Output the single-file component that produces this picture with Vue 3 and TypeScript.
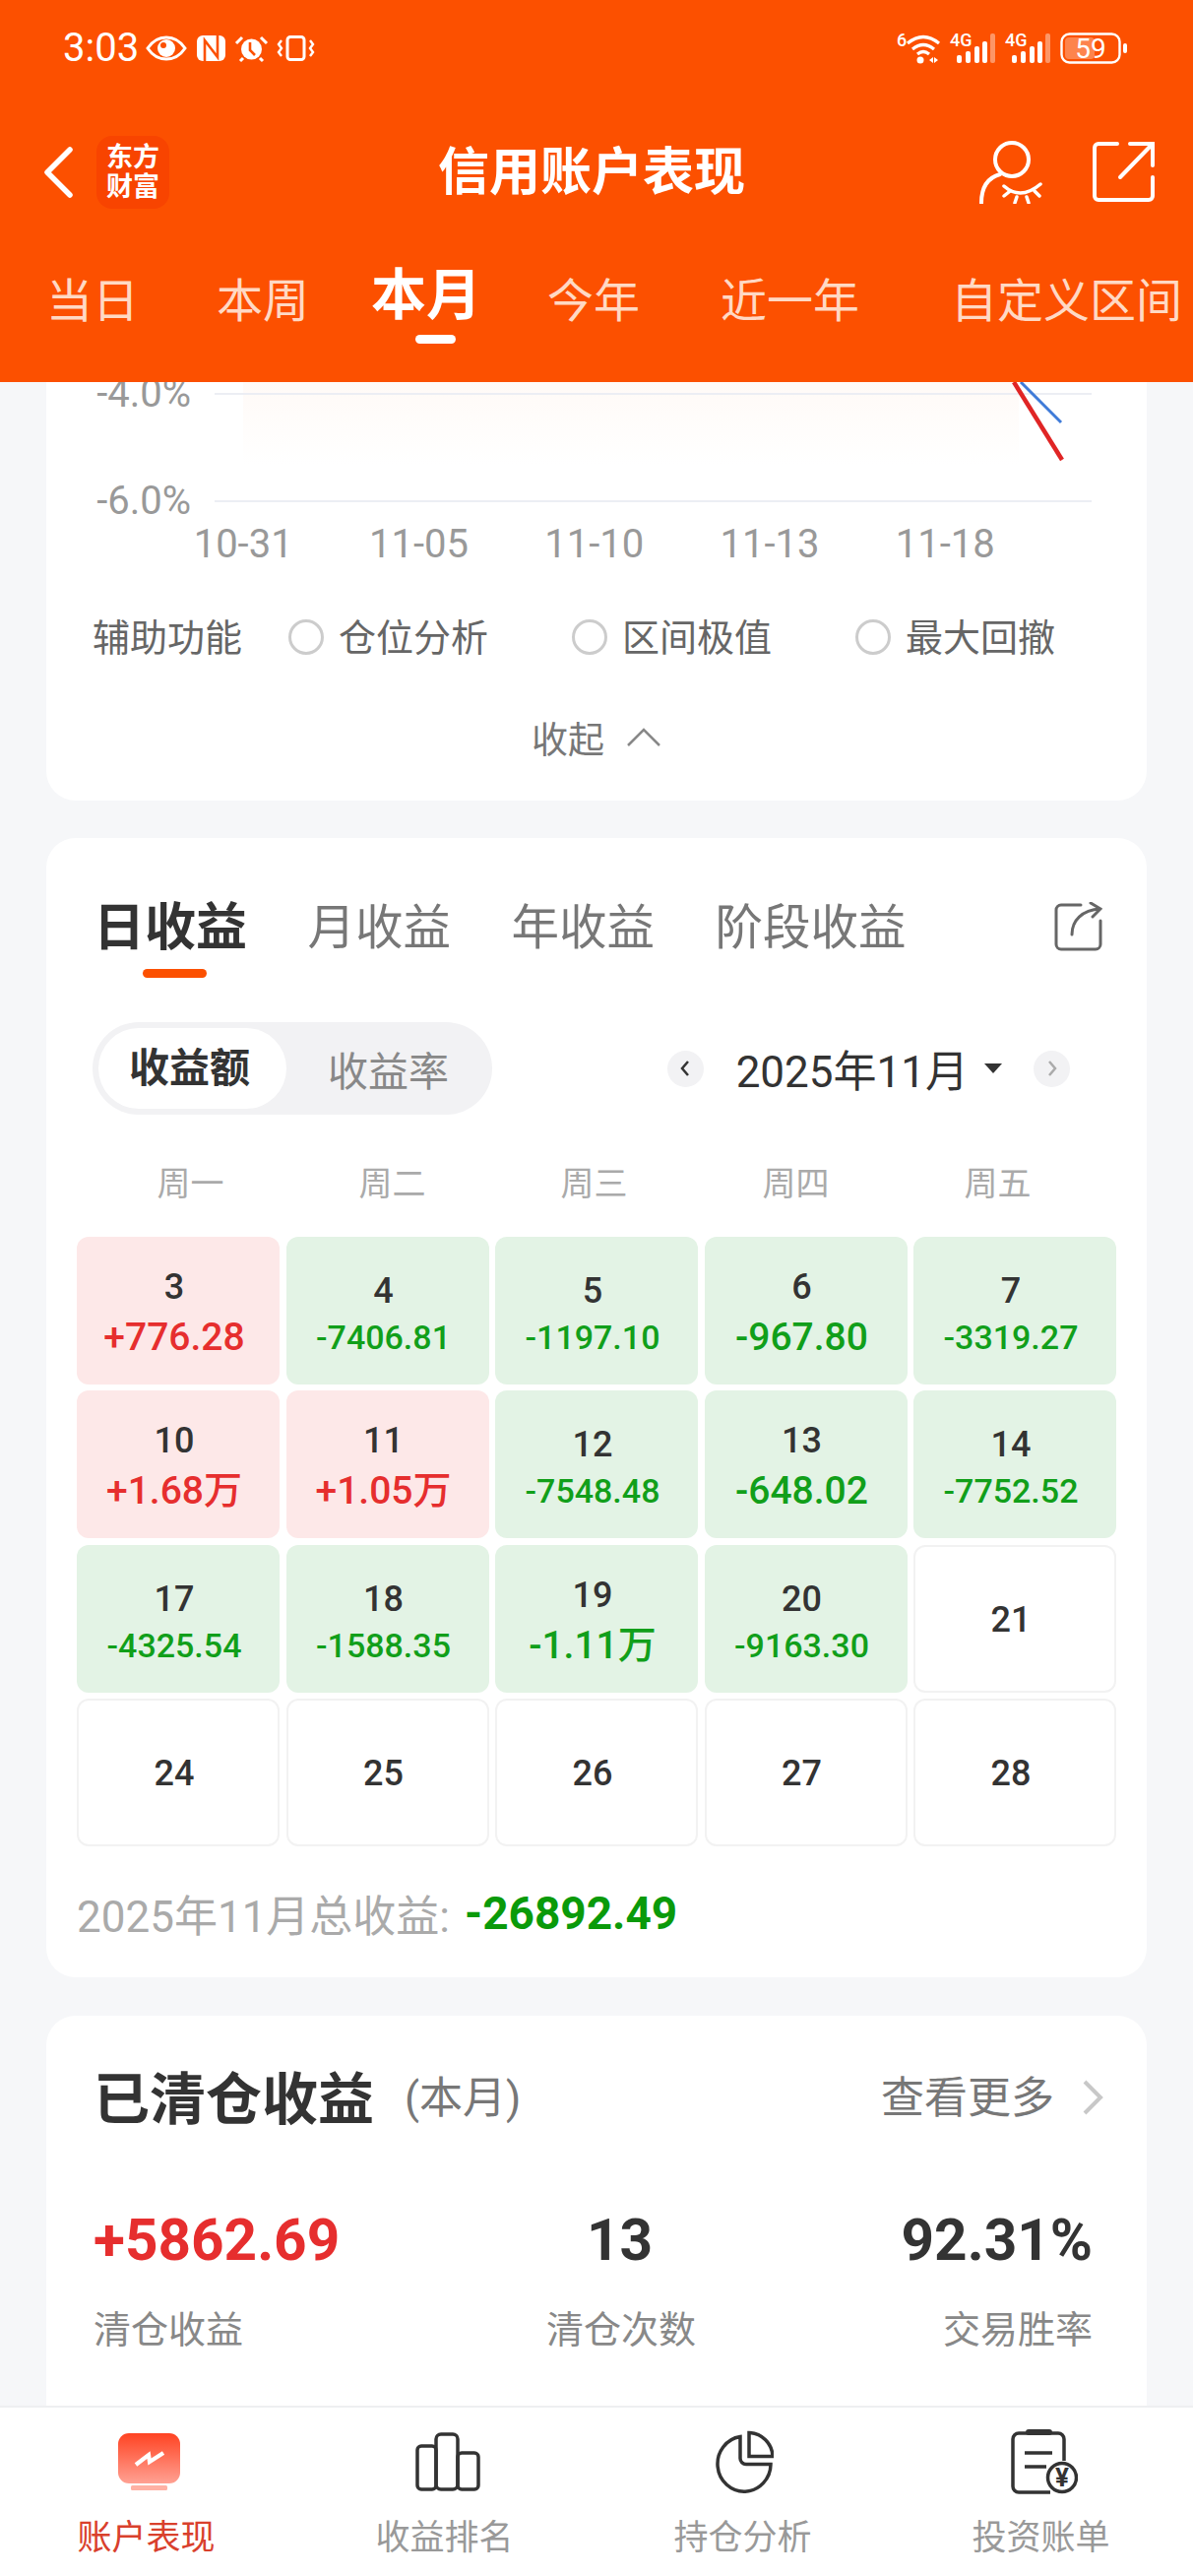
<script setup lang="ts">
type Day = { day: number; value?: string };

const periods = ['当日', '本周', '本月', '今年', '近一年', '自定义区间'];
const xLabels = ['10-31', '11-05', '11-10', '11-13', '11-18'];
const helpers = ['仓位分析', '区间极值', '最大回撤'];
const incomeTabs = ['日收益', '月收益', '年收益', '阶段收益'];
const weekdays = ['周一', '周二', '周三', '周四', '周五'];

const days: Day[] = [
  { day: 3, value: '+776.28' },
  { day: 4, value: '-7406.81' },
  { day: 5, value: '-1197.10' },
  { day: 6, value: '-967.80' },
  { day: 7, value: '-3319.27' },
  { day: 10, value: '+1.68万' },
  { day: 11, value: '+1.05万' },
  { day: 12, value: '-7548.48' },
  { day: 13, value: '-648.02' },
  { day: 14, value: '-7752.52' },
  { day: 17, value: '-4325.54' },
  { day: 18, value: '-1588.35' },
  { day: 19, value: '-1.11万' },
  { day: 20, value: '-9163.30' },
  { day: 21 },
  { day: 24 },
  { day: 25 },
  { day: 26 },
  { day: 27 },
  { day: 28 },
];

function cellClass(d: Day) {
  if (!d.value) return 'empty';
  return d.value.startsWith('+') ? 'up' : 'down';
}
</script>

<template>
  <div class="page">
    <header class="top">
      <div class="status">
        <div class="status-left">
          <span class="time">3:03</span>
          <svg width="42" height="26" viewBox="0 0 42 26">
            <path d="M2 13C8 4 14 2 21 2s13 2 19 11c-6 9-12 11-19 11S8 22 2 13Z" fill="none" stroke="#fff" stroke-width="3" />
            <circle cx="21" cy="13" r="9" fill="#fff" />
            <circle cx="18" cy="10" r="3" fill="#fc5000" />
          </svg>
          <svg width="29" height="26" viewBox="0 0 29 26">
            <rect x="0" y="0" width="29" height="26" rx="6" fill="#fff" />
            <path d="M8 26V5l13 17V0" fill="none" stroke="#fc5000" stroke-width="2.6" />
          </svg>
          <svg width="33" height="27" viewBox="0 0 33 27">
            <circle cx="16.500" cy="14" r="10.500" fill="#fff" />
            <path d="M15 7v8l5 5" fill="none" stroke="#fc5000" stroke-width="2.600" />
            <path d="M1 8l6-6M32 8l-6-6M5 26l3-3M28 26l-3-3" stroke="#fff" stroke-width="3" />
          </svg>
          <svg width="37" height="26" viewBox="0 0 37 26">
            <rect x="10" y="1.500" width="17" height="23" rx="3" fill="none" stroke="#fff" stroke-width="3" />
            <path d="M4 5L1 9l3 4-3 4 3 4M33 5l3 4-3 4 3 4-3 4" fill="none" stroke="#fff" stroke-width="2.400" />
          </svg>
        </div>
        <div class="status-right">
          <svg width="44" height="32" viewBox="0 0 44 32">
            <text x="0" y="14" class="mini">6</text>
            <path d="M11 11Q27-2 43 11M16 17q11-9 22 0M21 22q6-5 12 0" fill="none" stroke="#fff" stroke-width="3.200" />
            <circle cx="24" cy="28" r="3.500" fill="#fff" />
            <path d="M33 28l4-3v6zM38 25l4 3-4 3z" fill="#fff" />
          </svg>
          <svg v-for="n in 2" :key="n" width="46" height="32" viewBox="0 0 46 32">
            <text x="0" y="14" class="mini">4G</text>
            <rect x="7" y="23" width="5" height="8" rx="2" fill="#fff" />
            <rect x="16" y="19" width="5" height="12" rx="2" fill="#fff" />
            <rect x="25" y="14" width="5" height="17" rx="2" fill="#fff" />
            <rect x="33" y="9" width="5" height="22" rx="2" fill="#fff" />
            <rect x="41" y="1" width="5" height="30" rx="2" fill="#fff" opacity="0.4" />
          </svg>
          <svg width="68" height="32" viewBox="0 0 68 32">
            <rect x="1.500" y="1.500" width="59" height="29" rx="8" fill="none" stroke="#fff" stroke-width="2.400" />
            <rect x="5" y="5" width="30" height="22" rx="4" fill="#fff" opacity="0.3" />
            <rect x="64" y="11" width="4" height="10" rx="2" fill="#fff" />
            <text x="31" y="26" text-anchor="middle" class="batt">59</text>
          </svg>
        </div>
      </div>

      <div class="nav">
        <div class="nav-left">
          <svg width="30" height="52" viewBox="0 0 30 52">
            <path d="M27 3L4 26l23 23" fill="none" stroke="#fff" stroke-width="5.500" stroke-linecap="round" stroke-linejoin="round" />
          </svg>
          <div class="logo"><span>东方</span><span>财富</span></div>
        </div>
        <div class="title">信用账户表现</div>
        <div class="nav-right">
          <svg width="65" height="64" viewBox="0 0 65 64" fill="none" stroke="#fff" stroke-linecap="round">
            <circle cx="33" cy="19" r="17" stroke-width="4" />
            <path d="M21 34C10 37 2 46 2 63" stroke-width="4" />
            <path d="M25 46q17 15 37-2M30 52l-5 4M38 57l-2 6M48 57l2 6M56 51l5 5" stroke-width="3.500" />
          </svg>
          <svg width="63" height="61" viewBox="0 0 63 61" fill="none" stroke="#fff" stroke-width="4" stroke-linecap="round">
            <path d="M25 2H6a4 4 0 0 0-4 4v49a4 4 0 0 0 4 4h51a4 4 0 0 0 4-4V36" />
            <path d="M28 36L60 3M38 2h23v22" />
          </svg>
        </div>
      </div>

      <nav class="periods">
        <div v-for="p in periods" :key="p" class="period" :class="{ active: p === '本月' }">{{ p }}</div>
      </nav>
    </header>

    <main class="content">
      <section class="card chart-card">
        <svg class="chart" width="1118" height="150" viewBox="0 0 1118 150">
          <defs>
            <linearGradient id="band" x1="0" y1="0" x2="0" y2="1">
              <stop offset="0" stop-color="#fffaf7" />
              <stop offset="1" stop-color="#ffffff" />
            </linearGradient>
          </defs>
          <rect x="200" y="0" width="788" height="84" fill="url(#band)" />
          <line x1="171" y1="12" x2="1062" y2="12" stroke="#eceef4" stroke-width="2" />
          <line x1="171" y1="121" x2="1062" y2="121" stroke="#eceef4" stroke-width="2" />
          <line x1="990" y1="0" x2="1031" y2="41" stroke="#3f7bd8" stroke-width="3" />
          <line x1="983" y1="0" x2="1032" y2="79" stroke="#e02525" stroke-width="4.500" />
          <text x="147" y="25" text-anchor="end" class="axis">-4.0%</text>
          <text x="147" y="134" text-anchor="end" class="axis">-6.0%</text>
        </svg>
        <div class="x-labels">
          <span v-for="l in xLabels" :key="l">{{ l }}</span>
        </div>
        <div class="helpers">
          <span class="helper-label">辅助功能</span>
          <label v-for="h in helpers" :key="h" class="helper">
            <i class="radio"></i>{{ h }}
          </label>
        </div>
        <div class="collapse">
          <span>收起</span>
          <svg width="36" height="20" viewBox="0 0 36 20">
            <path d="M2 18L18 2l16 16" fill="none" stroke="#888" stroke-width="2.500" />
          </svg>
        </div>
      </section>

      <section class="card income-card">
        <div class="income-tabs">
          <div v-for="(t, i) in incomeTabs" :key="t" class="income-tab" :class="{ active: i === 0 }">{{ t }}</div>
          <svg class="income-share" width="49" height="50" viewBox="0 0 49 50" fill="none" stroke="#666" stroke-width="3" stroke-linecap="round">
            <path d="M27 3H7a5 5 0 0 0-5 5v35a5 5 0 0 0 5 5h35a5 5 0 0 0 5-5V19" />
            <path d="M18 33c0-14 10-25 29-26M37 1l10 6-8 8" />
          </svg>
        </div>

        <div class="controls">
          <div class="segment">
            <div class="seg-item on">收益额</div>
            <div class="seg-item">收益率</div>
          </div>
          <div class="month">
            <span class="month-btn">
              <svg width="12" height="20" viewBox="0 0 12 20"><path d="M9 3L3 10l6 7" fill="none" stroke="#333" stroke-width="2.500" /></svg>
            </span>
            <span class="month-text">2025年11月</span>
            <i class="caret"></i>
            <span class="month-btn">
              <svg width="12" height="20" viewBox="0 0 12 20"><path d="M3 3l6 7-6 7" fill="none" stroke="#aaa" stroke-width="2.500" /></svg>
            </span>
          </div>
        </div>

        <div class="weekdays">
          <span v-for="w in weekdays" :key="w">{{ w }}</span>
        </div>

        <div class="calendar">
          <div v-for="d in days" :key="d.day" class="cell" :class="cellClass(d)">
            <div class="day">{{ d.day }}</div>
            <div v-if="d.value" class="amount" :class="{ small: d.value.length >= 8 }">{{ d.value }}</div>
          </div>
        </div>

        <div class="total">
          <span>2025年11月总收益:</span>
          <b>-26892.49</b>
        </div>
      </section>

      <section class="card closed-card">
        <div class="closed-head">
          <h2>已清仓收益</h2>
          <span class="closed-range">(本月)</span>
          <span class="more">查看更多</span>
          <svg class="more-arrow" width="22" height="36" viewBox="0 0 22 36">
            <path d="M3 2l16 16L3 34" fill="none" stroke="#c8c8c8" stroke-width="4" />
          </svg>
        </div>
        <div class="stats">
          <b class="red">+5862.69</b>
          <b class="mid">13</b>
          <b class="end">92.31%</b>
          <span>清仓收益</span>
          <span class="mid">清仓次数</span>
          <span class="end">交易胜率</span>
        </div>
      </section>
    </main>

    <footer class="tabbar">
      <div class="tab active">
        <svg class="nudge" width="63" height="60" viewBox="0 0 63 60">
          <defs>
            <linearGradient id="tabicon" x1="0" y1="0" x2="0" y2="1">
              <stop offset="0" stop-color="#ff4322" />
              <stop offset="1" stop-color="#ffa193" />
            </linearGradient>
          </defs>
          <rect x="0" y="1" width="63" height="51" rx="11" fill="url(#tabicon)" />
          <rect x="13" y="54" width="37" height="5" rx="1.500" fill="#ffb1a4" />
          <path d="M18 33l13-10 1 7 14-9" fill="none" stroke="#fff" stroke-width="4.200" />
        </svg>
        <span>账户表现</span>
      </div>
      <div class="tab">
        <svg class="nudge" width="66" height="60" viewBox="0 0 66 60" fill="none" stroke="#333" stroke-width="3.500">
          <rect x="2" y="14" width="19" height="44" rx="4" />
          <rect x="21" y="2" width="22" height="56" rx="5" />
          <rect x="43" y="21" width="21" height="37" rx="4" />
        </svg>
        <span>收益排名</span>
      </div>
      <div class="tab">
        <svg width="62" height="63" viewBox="0 0 62 63" fill="none" stroke="#333" stroke-width="3.500">
          <path d="M28 6A27 28 0 1 0 59 34H34a6 6 0 0 1-6-6Z" />
          <path d="M37 2v24h24A25 25 0 0 0 37 2Z" />
        </svg>
        <span>持仓分析</span>
      </div>
      <div class="tab">
        <svg class="nudge" width="68" height="66" viewBox="0 0 68 66">
          <path d="M40 64H8a6 6 0 0 1-6-6V10a6 6 0 0 1 6-6h40a6 6 0 0 1 6 6v22" fill="none" stroke="#333" stroke-width="3.500" />
          <rect x="15" y="0" width="27" height="6" rx="3" fill="#333" />
          <path d="M14 24h28M14 38h22" stroke="#333" stroke-width="3.500" />
          <circle cx="52" cy="49" r="14.500" fill="#fff" stroke="#333" stroke-width="3.500" />
          <text x="52" y="58" text-anchor="middle" class="yen">¥</text>
        </svg>
        <span>投资账单</span>
      </div>
    </footer>
  </div>
</template>

<style>
html,
body {
  margin: 0;
  background: #f6f7f9;
}
</style>

<style scoped>
.page {
  width: 1212px;
  height: 2616px;
  display: flex;
  flex-direction: column;
  overflow: hidden;
  background: #f6f7f9;
  font-family: Roboto, "Noto Sans CJK SC", sans-serif;
  color: #333;
}

/* header */
.top {
  height: 388px;
  flex: none;
  background: #fc5000;
  color: #fff;
  box-sizing: border-box;
  padding-top: 33px;
}
.status {
  height: 32px;
  display: flex;
  justify-content: space-between;
  align-items: center;
  padding: 0 67px 0 64px;
}
.status svg {
  overflow: visible;
}
.status-left,
.status-right {
  display: flex;
  align-items: center;
  gap: 10px;
}
.time {
  font-size: 40px;
  line-height: 32px;
  width: 74px;
}
.mini {
  font: 500 18px Roboto, sans-serif;
  fill: #fff;
}
.batt {
  font: 400 28px Roboto, sans-serif;
  fill: #fff;
}
.nav {
  margin-top: 71px;
  height: 74px;
  display: grid;
  grid-template-columns: 1fr auto 1fr;
  align-items: center;
}
.nav-left {
  display: flex;
  align-items: center;
  gap: 24px;
  padding-left: 44px;
}
.logo {
  width: 74px;
  height: 74px;
  border-radius: 16px;
  background: #f84400;
  display: flex;
  flex-direction: column;
  align-items: center;
  justify-content: center;
  font-size: 27px;
  line-height: 30px;
  font-weight: 700;
}
.title {
  font-size: 52px;
  font-weight: 700;
  line-height: 74px;
  padding: 3px 10px 0 0;
}
.nav-right {
  display: flex;
  justify-content: flex-end;
  align-items: center;
  gap: 50px;
  padding-right: 39px;
}
.periods {
  display: flex;
  align-items: center;
  padding-left: 47px;
  margin-top: 66px;
  height: 60px;
  white-space: nowrap;
}
.period {
  font-size: 47px;
  line-height: 60px;
  color: #ffd9c4;
  flex: none;
}
.period:nth-child(2) {
  margin-left: 79px;
}
.period:nth-child(3) {
  margin-left: 63px;
}
.period:nth-child(4) {
  margin-left: 67px;
}
.period:nth-child(5) {
  margin-left: 82px;
}
.period:nth-child(6) {
  margin-left: 93px;
}
.period.active {
  position: relative;
  top: -6px;
  font-size: 56px;
  font-weight: 700;
  color: #fff;
}
.period.active::after {
  content: "";
  position: absolute;
  left: 45px;
  bottom: -19px;
  width: 41px;
  height: 9px;
  border-radius: 5px;
  background: #fff;
}

/* scrolled content */
.content {
  flex: 1;
  min-height: 0;
  overflow: hidden;
  padding: 0 47px;
}
.card {
  background: #fff;
  border-radius: 30px;
}

.chart-card {
  border-radius: 0 0 30px 30px;
  padding-bottom: 39px;
}
.chart {
  display: block;
  margin-bottom: -10px;
}
.axis {
  font: 400 40px Roboto, sans-serif;
  fill: #999;
}
.x-labels {
  margin: 5px 0 0 111px;
  display: flex;
  height: 40px;
  font-size: 40px;
  line-height: 40px;
  color: #999;
}
.x-labels span {
  width: 178.3px;
  text-align: center;
}
.helpers {
  margin-top: 46px;
  padding-left: 47px;
  display: flex;
  align-items: center;
  height: 50px;
  font-size: 38px;
  color: #666;
}
.helper-label {
  width: 199px;
  white-space: nowrap;
}
.helper {
  width: 288px;
  display: flex;
  align-items: center;
  gap: 15px;
  white-space: nowrap;
}
.radio {
  width: 36px;
  height: 36px;
  margin-top: 6px;
  box-sizing: border-box;
  border: 3px solid #ccc;
  border-radius: 50%;
  flex: none;
}
.collapse {
  margin-top: 55px;
  height: 50px;
  display: flex;
  justify-content: center;
  align-items: center;
  gap: 22px;
  font-size: 37px;
  color: #777;
}

/* income card */
.income-card {
  margin-top: 38px;
  padding: 62px 31px 35px;
}
.income-tabs {
  display: flex;
  align-items: center;
  height: 60px;
  padding-left: 17px;
  gap: 61.5px;
  position: relative;
}
.income-tab {
  font-size: 48.5px;
  line-height: 60px;
  color: #777;
  white-space: nowrap;
}
.income-tab.active {
  position: relative;
  font-size: 52px;
  font-weight: 700;
  color: #333;
}
.income-tab.active::after {
  content: "";
  position: absolute;
  left: 50px;
  top: 71px;
  width: 65px;
  height: 9px;
  border-radius: 5px;
  background: #fc5000;
}
.income-share {
  position: absolute;
  right: 14px;
  top: 3px;
}
.controls {
  margin-top: 65px;
  display: flex;
  justify-content: space-between;
  align-items: center;
  padding: 0 47px 0 16px;
}
.segment {
  width: 406px;
  height: 94px;
  box-sizing: border-box;
  padding: 6px;
  border-radius: 47px;
  background: #f2f2f4;
  display: flex;
  align-items: center;
}
.seg-item {
  font-size: 41px;
  color: #888;
  white-space: nowrap;
  padding-left: 42px;
}
.seg-item.on {
  width: 191px;
  height: 82px;
  box-sizing: border-box;
  line-height: 82px;
  padding: 0 6px 0 0;
  border-radius: 41px;
  background: #fff;
  text-align: center;
  font-weight: 700;
  color: #333;
}
.month {
  display: flex;
  align-items: center;
}
.month-btn {
  width: 37px;
  height: 37px;
  border-radius: 50%;
  background: #f2f2f4;
  display: flex;
  align-items: center;
  justify-content: center;
}
.month-text {
  font-size: 44px;
  margin-left: 33px;
  white-space: nowrap;
  color: #333;
}
.caret {
  margin: 0 32px 0 16px;
  width: 0;
  height: 0;
  border-left: 9px solid transparent;
  border-right: 9px solid transparent;
  border-top: 10px solid #333;
}
.weekdays {
  margin-top: 50px;
  padding-left: 13px;
  display: flex;
  height: 40px;
  font-size: 34px;
  line-height: 40px;
  color: #aaa;
}
.weekdays span {
  width: 205px;
  text-align: center;
}
.calendar {
  margin-top: 34px;
  display: grid;
  grid-template-columns: repeat(5, 206px);
  grid-auto-rows: 150px;
  gap: 6.4px 6.5px;
}
.cell {
  border-radius: 12px;
  box-sizing: border-box;
  padding-right: 8px;
  display: flex;
  flex-direction: column;
  align-items: center;
  justify-content: center;
}
.cell.up {
  background: #fde8e8;
  color: #e62e2e;
}
.cell.down {
  background: #e3f3e5;
  color: #119f1a;
}
.cell.empty {
  border: 2px solid #f2f2f2;
  padding-top: 2px;
}
.day {
  font-size: 36px;
  line-height: 54px;
  font-weight: 500;
  color: #333;
}
.amount {
  font-size: 39px;
  line-height: 48px;
  font-weight: 500;
  white-space: nowrap;
}
.amount.small {
  font-size: 34px;
  line-height: 40px;
}
.total {
  margin-top: 38px;
  height: 60px;
  display: flex;
  align-items: center;
  gap: 15px;
  font-size: 44px;
  color: #aaa;
  white-space: nowrap;
}
.total b {
  font-size: 46px;
  font-weight: 700;
  color: #0a9a0a;
}

/* closed positions */
.closed-card {
  margin-top: 39px;
  padding: 45px 44px 140px 48px;
}
.closed-head {
  height: 70px;
  display: flex;
  align-items: center;
  white-space: nowrap;
}
.closed-head h2 {
  margin: 0;
  font-size: 57px;
  font-weight: 700;
  color: #333;
}
.closed-range {
  margin-left: 31px;
  font-size: 44px;
  color: #777;
}
.more {
  margin: 0 28px 0 auto;
  font-size: 44px;
  color: #777;
}
.more-arrow {
  margin-top: 6px;
}
.stats {
  margin-top: 78px;
  padding-right: 11px;
  display: grid;
  grid-template-columns: 460px 149px 1fr;
  grid-template-rows: 70px 50px;
  row-gap: 31px;
  align-items: center;
  white-space: nowrap;
}
.stats b {
  font-size: 58.5px;
  font-weight: 700;
  color: #333;
  line-height: 70px;
}
.stats b.red {
  color: #e62e2e;
}
.stats span {
  font-size: 38px;
  line-height: 50px;
  color: #888;
}
.stats .mid {
  text-align: center;
}
.stats .end {
  text-align: right;
}

/* tab bar */
.tabbar {
  height: 173px;
  flex: none;
  box-sizing: border-box;
  border-top: 2px solid #eeeff1;
  background: #fff;
  display: grid;
  grid-template-columns: repeat(4, 303px);
  margin-left: -3px;
}
.tab {
  padding-top: 22px;
  display: flex;
  flex-direction: column;
  align-items: center;
}
.tab svg {
  display: block;
  height: 66px;
}
.tab svg.nudge {
  margin-left: 6px;
}
.tab span {
  margin-top: 25px;
  font-size: 35px;
  line-height: 40px;
  color: #999;
}
.tab.active span {
  color: #d9402c;
}
.yen {
  font: 700 26px Roboto, sans-serif;
  fill: #333;
}
</style>
